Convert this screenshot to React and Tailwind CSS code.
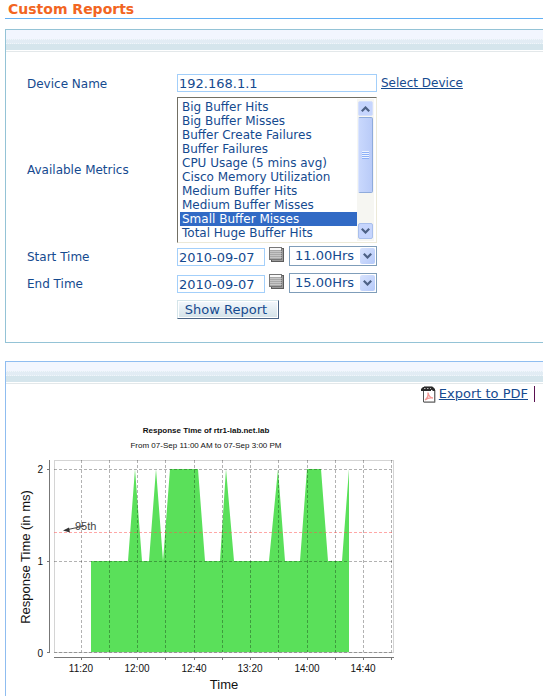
const METRICS = [
  "Big Buffer Hits",
  "Big Buffer Misses",
  "Buffer Create Failures",
  "Buffer Failures",
  "CPU Usage (5 mins avg)",
  "Cisco Memory Utilization",
  "Medium Buffer Hits",
  "Medium Buffer Misses",
  "Small Buffer Misses",
  "Total Huge Buffer Hits",
];

const HOURS = ["11.00Hrs", "12.00Hrs", "13.00Hrs", "14.00Hrs", "15.00Hrs"];

const GRID_X = [75, 103, 131, 159, 188, 216, 244, 272, 301, 329, 357, 385];

const TIME_LABELS = [
  { x: 75, text: "11:20" },
  { x: 131, text: "12:00" },
  { x: 188, text: "12:40" },
  { x: 244, text: "13:20" },
  { x: 301, text: "14:00" },
  { x: 357, text: "14:40" },
];

const VALUE_LABELS = [
  { y: 65, text: "2" },
  { y: 157, text: "1" },
  { y: 249, text: "0" },
];

function Chevron({ up }) {
  return (
    <svg width="9" height="6" viewBox="0 0 9 6" fill="none" stroke="#4d6185" strokeWidth="2.2">
      <path d={up ? "M0.8 5.2 4.5 1.5 8.2 5.2" : "M0.8 0.8 4.5 4.5 8.2 0.8"} />
    </svg>
  );
}

function CalendarIcon() {
  return (
    <svg width="15" height="15" viewBox="0 0 15 15">
      <path d="M2 1h13v14H2z" fill="#5c5c5c" />
      <path d="M13 2h1v12H3v-1h10z" fill="#9a9a9a" />
      <path d="M0 0h13v13H0z" fill="#777" />
      <path d="M1 1h11v11H1z" fill="#a8a8a8" />
      <path d="M1 1h11v2H1z" fill="#f8f8f8" />
      <path
        d="M1.500 4.500h11M1.500 6.500h11M1.500 8.500h11M1.500 10.500h11"
        stroke="#e4e4e4"
        strokeWidth="1"
        strokeDasharray="1 1"
      />
    </svg>
  );
}

function PdfIcon() {
  return (
    <svg width="15" height="17" viewBox="0 0 15 17">
      <path d="M2.500 3.500h11v12.500h-11z" fill="#fff" stroke="#555" />
      <path d="M14 4v12.500H3" fill="none" stroke="#888" />
      <path d="M2 1h10l2 2v2h-2L10.500 3.500H10V5H0V3z" fill="#2b2b2b" />
      <path d="M3 0.500h8.500" stroke="#8a8a8a" />
      <path d="M3 2.500h1.500M6 2.500h1.500M9 2.500h1" stroke="#bbb" />
      <path
        d="M4 14C5.500 13 7.500 10 7 6.500C7.500 9.500 9 11.500 12 12C9 11.500 6.500 12 4 14"
        fill="none"
        stroke="#f39a96"
        strokeWidth="1.4"
      />
    </svg>
  );
}

function PanelHeader() {
  return (
    <div className="h-[22px] border-b border-[#e3e8ea] bg-white pb-px">
      <div className="flex h-5 flex-col bg-[#d5e5ec]">
        <div className="h-[9px] bg-[#f2f6fe]" />
        <div className="h-[5px] border-y border-dotted border-[#f0f6fa] bg-[#e2ecf4]" />
      </div>
    </div>
  );
}

function FormRow({ label, htmlFor, children }) {
  return (
    <div className="flex min-h-[27px] items-center">
      <label htmlFor={htmlFor} className="w-[150px] shrink-0 text-[12px]">
        {label}
      </label>
      {children}
    </div>
  );
}

function TimeFields({ id, name, hour }) {
  return (
    <div className="flex items-end pb-px">
      <input
        id={id}
        type="text"
        defaultValue="2010-09-07"
        className="h-[18px] w-[88px] border border-[#a3cffa] bg-white px-px outline-none"
      />
      <button type="button" aria-label={`Pick ${name} date`} className="mr-[5px] mb-1 ml-1">
        <CalendarIcon />
      </button>
      <div className="relative">
        <select
          aria-label={`${name} hour`}
          defaultValue={hour}
          className="block h-5 w-[88px] appearance-none border border-[#7f9db9] bg-white pl-[5px] leading-4 outline-none"
        >
          {HOURS.map((h) => (
            <option key={h}>{h}</option>
          ))}
        </select>
        <span className="pointer-events-none absolute top-0.5 right-0.5 flex h-4 w-[15px] items-center justify-center rounded-xs bg-linear-to-br from-[#d8e3fd] to-[#b5c9f9]">
          <Chevron />
        </span>
      </div>
    </div>
  );
}

function ScrollBar() {
  return (
    <div aria-hidden="true" className="flex w-[17px] flex-col items-center bg-[#f6f6f2] py-0.5">
      <div className="flex h-[15px] w-[15px] items-center justify-center rounded-xs border border-[#d5e0fb] bg-[#c6d5fd]">
        <Chevron up />
      </div>
      <div className="mt-px flex h-[76px] w-[15px] flex-col items-center justify-center rounded-xs border border-t-[#8fabdc] border-r-[#8fabdc] border-b-[#8fabdc] border-l-[#dbe5fd] bg-linear-to-r from-[#c9d8fd] to-[#b9cbf8]">
        <span className="h-px w-[7px] bg-[#eef4fe]" />
        <span className="h-px w-[7px] bg-[#8cb0f8]" />
        <span className="h-px w-[7px] bg-[#eef4fe]" />
        <span className="h-px w-[7px] bg-[#8cb0f8]" />
        <span className="h-px w-[7px] bg-[#eef4fe]" />
        <span className="h-px w-[7px] bg-[#8cb0f8]" />
        <span className="h-px w-[7px] bg-[#eef4fe]" />
        <span className="h-px w-[7px] bg-[#8cb0f8]" />
      </div>
      <div className="mt-auto flex h-4 w-[15px] items-center justify-center rounded-xs border border-[#a9bfec] bg-[#c6d5fd]">
        <Chevron />
      </div>
    </div>
  );
}

function MetricList() {
  return (
    <div className="flex h-[146px] w-[200px] border border-t-[#716f64] border-r-[#ece9d8] border-b-[#ece9d8] border-l-[#716f64] bg-white px-0.5 py-px">
      <select
        id="metrics"
        multiple
        size={10}
        defaultValue={["Small Buffer Misses"]}
        className="mt-px h-[141px] w-[177px] appearance-none overflow-hidden border-0 bg-white p-0 text-[12px] outline-none [scrollbar-width:none]"
      >
        {METRICS.map((m) => (
          <option
            key={m}
            className="h-[14px] min-h-0 p-0 pl-0.5 leading-[14px] text-[#154a8f] checked:bg-linear-to-r checked:from-[#316ac5] checked:to-[#316ac5] checked:text-white"
          >
            {m}
          </option>
        ))}
      </select>
      <ScrollBar />
    </div>
  );
}

function ResponseChart() {
  return (
    <svg
      width="400"
      height="292"
      viewBox="0 0 400 292"
      className="block font-['Liberation_Sans',Arial,sans-serif]"
      fill="#111"
    >
      <text x="200" y="29" fontSize="8" fontWeight="bold" textAnchor="middle">
        Response Time of rtr1-lab.net.lab
      </text>
      <text x="200" y="44" fontSize="8" textAnchor="middle">
        From 07-Sep 11:00 AM to 07-Sep 3:00 PM
      </text>

      <rect x="48.5" y="56.5" width="339" height="192" fill="none" stroke="#d4d4d4" />
      <path
        fill="#5ae05a"
        d="M85 248V157H122L129 65L136 157H143L150 65L157 157L164 65H192L199 157H214L220 65L228 157H263L272 65L279 157H294L301 65H315L322 157H336L343 65V248Z"
      />

      <g stroke="#000" strokeOpacity="0.3" strokeDasharray="3 2">
        {GRID_X.map((x) => (
          <path key={x} d={`M${x + 0.5} 56V248`} />
        ))}
        {[65, 157, 248].map((y) => (
          <path key={y} d={`M48 ${y + 0.5}H388`} />
        ))}
      </g>
      <path d="M48 128.500H388" stroke="#ff5050" strokeOpacity="0.5" strokeDasharray="3 2" />

      <g stroke="#777">
        <path d="M43.500 56V249M41 65.500H43M41 157.500H43M41 248.500H43" />
        <path d="M48 253.500H388" />
        {GRID_X.map((x) => (
          <path key={x} d={`M${x + 0.5} 254V256`} />
        ))}
      </g>

      <path d="M78 122L62 125.500" stroke="#444" />
      <path d="M57 126.500L63 123.500L64 128.500Z" fill="#333" />
      <text x="69" y="126" fontSize="11" fill="#444">
        95th
      </text>

      {VALUE_LABELS.map((v) => (
        <text key={v.text} x="37" y={v.y + 4} fontSize="10" textAnchor="end">
          {v.text}
        </text>
      ))}
      {TIME_LABELS.map((t) => (
        <text key={t.text} x={t.x} y="268" fontSize="10" textAnchor="middle">
          {t.text}
        </text>
      ))}
      <text x="218" y="285" fontSize="13" textAnchor="middle">
        Time
      </text>
      <text transform="translate(24 153) rotate(-90)" fontSize="13" textAnchor="middle">
        Response Time (in ms)
      </text>
    </svg>
  );
}

export default function App() {
  return (
    <div className="bg-white pl-[5px] font-[Verdana,'DejaVu_Sans',sans-serif] text-[13px] leading-4 text-[#154a8f]">
      <h1 className="h-[19px] border-b border-[#62b0f5] pt-px pl-[3px] text-[14px] leading-4 font-bold text-[#f26522]">
        Custom Reports
      </h1>

      <section className="mt-2.5 border-y border-l border-[#94c3d6]">
        <PanelHeader />
        <form className="py-[18px] pl-[21px]" onSubmit={(e) => e.preventDefault()}>
          <FormRow label="Device Name" htmlFor="device">
            <div className="flex items-center pb-px">
              <input
                id="device"
                type="text"
                defaultValue="192.168.1.1"
                className="h-[18px] w-[200px] border border-[#a3cffa] bg-white px-px outline-none"
              />
              <a href="#select-device" className="ml-1 text-[12px] underline">
                Select Device
              </a>
            </div>
          </FormRow>
          <FormRow label="Available Metrics" htmlFor="metrics">
            <MetricList />
          </FormRow>
          <FormRow label="Start Time" htmlFor="start">
            <TimeFields id="start" name="Start" hour="11.00Hrs" />
          </FormRow>
          <FormRow label="End Time" htmlFor="end">
            <TimeFields id="end" name="End" hour="15.00Hrs" />
          </FormRow>
          <div className="flex h-[27px] items-start pt-[3px] pl-[150px]">
            <button
              type="submit"
              className="h-[19px] w-[102px] border border-t-[#d5e5ea] border-r-[#4a6484] border-b-[#4a6484] border-l-[#d5e5ea] bg-linear-to-b from-[#f4f8fd] to-[#d3e2e8] pr-1 leading-4 shadow-[inset_0_0_0_1px_#fff]"
            >
              Show Report
            </button>
          </div>
        </form>
      </section>

      <section className="mt-[18px] border-t border-l border-[#8fbdf0]">
        <PanelHeader />
        <div className="flex h-5 items-center justify-end pr-2">
          <PdfIcon />
          <a href="#export" className="ml-[3px] underline">
            Export to PDF
          </a>
          <span className="ml-1.5 h-4 w-px bg-[#5a1050]" />
        </div>
        <ResponseChart />
      </section>
    </div>
  );
}
